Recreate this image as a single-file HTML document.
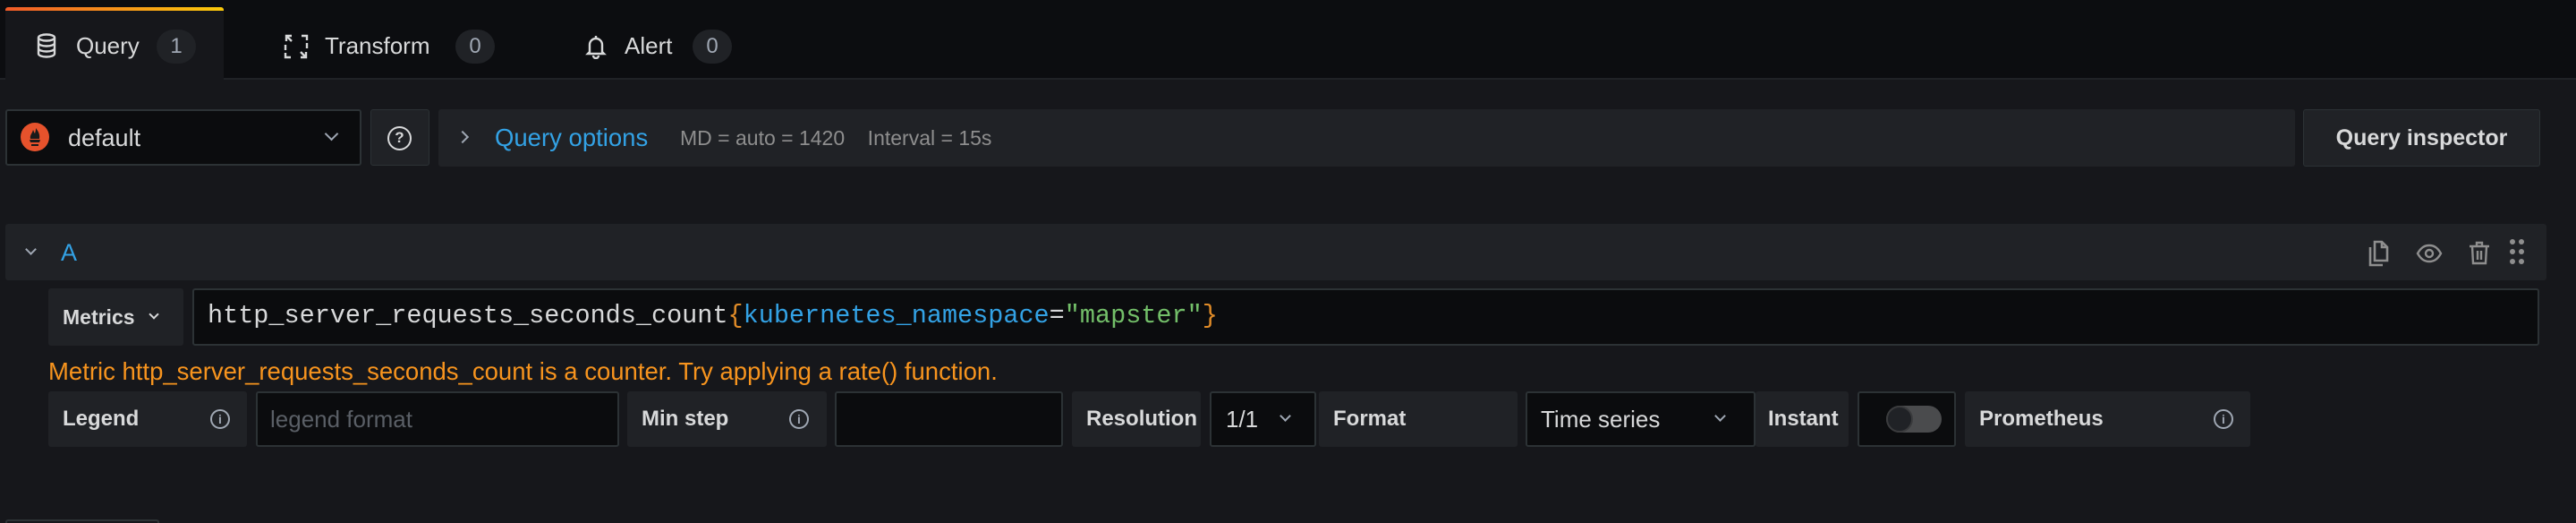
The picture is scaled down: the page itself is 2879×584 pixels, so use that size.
<!DOCTYPE html>
<html><head><meta charset="utf-8"><style>
*{box-sizing:border-box;margin:0;padding:0}
body{width:2879px;height:584px;background:#16171b;font-family:"Liberation Sans",sans-serif;color:#d8d9da;position:relative;overflow:hidden}
.a{position:absolute}
.top{left:0;top:0;width:2879px;height:89px;background:#0c0d10;border-bottom:2px solid #202226}
.tab{top:8px;left:6px;width:244px;height:83px;background:#16171b;border-radius:3px 3px 0 0}
.tab .g{position:absolute;left:0;top:0;width:100%;height:4px;background:linear-gradient(90deg,#f05a28,#fbca0a);border-radius:3px 3px 0 0}
.tt{font-size:26px;top:33px;line-height:36px}
.badge{top:33px;height:38px;width:44px;border-radius:19px;background:#202226;color:#9fa7b3;font-size:24px;text-align:center;line-height:38px}
.box{background:#202226;border-radius:3px}
.inp{background:#0b0c0e;border:2px solid #2c3235;border-radius:3px}
.lbl{font-size:24px;font-weight:bold;color:#d8d9da;line-height:62px;padding-left:16px}
.info{width:22px;height:22px;border:2px solid #9fa7b3;border-radius:50%;color:#9fa7b3;font-size:14px;text-align:center;line-height:18px;font-weight:bold}
.chev{width:12px;height:12px;border-right:2.5px solid #9fa7b3;border-bottom:2.5px solid #9fa7b3;transform:rotate(45deg)}
</style></head><body>
<div class="a top"></div>
<div class="a tab"><div class="g"></div></div>
<svg class="a" style="left:40px;top:37px" width="24" height="28" viewBox="0 0 24 28" fill="none" stroke="#d8d9da" stroke-width="2.4"><ellipse cx="12" cy="5" rx="9" ry="3.5"/><path d="M3 5v18c0 2 4 3.5 9 3.5s9-1.5 9-3.5V5M3 11c0 2 4 3.5 9 3.5s9-1.5 9-3.5M3 17c0 2 4 3.5 9 3.5s9-1.5 9-3.5"/></svg>
<div class="a tt" style="left:85px">Query</div>
<div class="a badge" style="left:175px">1</div>
<svg class="a" style="left:317px;top:38px" width="28" height="28" viewBox="0 0 28 28" fill="none" stroke="#d8d9da" stroke-width="2.4"><path d="M9 2H3v6M2 12v6M19 26h6v-6M26 16v-6M3 2l6 6M25 26l-6-6M20 2h6v5M8 26H2v-5"/></svg>
<div class="a tt" style="left:363px">Transform</div>
<div class="a badge" style="left:509px">0</div>
<svg class="a" style="left:654px;top:38px" width="24" height="28" viewBox="0 0 24 28" fill="none" stroke="#d8d9da" stroke-width="2.4"><path d="M12 2v3M5 20V12a7 7 0 0 1 14 0v8l2 2H3zM9 24a3 3 0 0 0 6 0"/></svg>
<div class="a tt" style="left:698px">Alert</div>
<div class="a badge" style="left:774px">0</div>

<div class="a inp" style="left:6px;top:122px;width:398px;height:63px"></div>
<svg class="a" style="left:23px;top:137px" width="32" height="32" viewBox="0 0 32 32"><circle cx="16" cy="16" r="16" fill="#e6522c"/><path d="M10 19h12l-1 3H11zM12 24h8v2h-8zM11 18c-1-4 2-6 3-10 1 2 1 3 2 4 1-3 1-4 1-6 2 3 5 6 4 12z" fill="#1a1a1a"/></svg>
<div class="a" style="left:76px;top:137px;font-size:27px;line-height:34px">default</div>
<div class="a chev" style="left:365px;top:144px;width:11px;height:11px"></div>
<div class="a box" style="left:414px;top:122px;width:66px;height:63px;background:#202226;border:1px solid #2c3235"></div>
<div class="a" style="left:433px;top:141px;width:27px;height:27px;border:2.5px solid #d8d9da;border-radius:50%;font-size:17px;font-weight:bold;text-align:center;line-height:22px">?</div>
<div class="a box" style="left:490px;top:122px;width:2075px;height:64px"></div>
<div class="a chev" style="left:512px;top:148px;transform:rotate(-45deg);width:10px;height:10px"></div>
<div class="a" style="left:553px;top:137px;font-size:27.5px;color:#33a2e5;line-height:34px">Query options</div>
<div class="a" style="left:760px;top:140px;font-size:23px;color:#8e8e8e;line-height:28px">MD = auto = 1420 &nbsp;&nbsp;&nbsp;Interval = 15s</div>
<div class="a box" style="left:2574px;top:122px;width:265px;height:64px;border:1px solid #2c3235"></div>
<div class="a" style="left:2574px;top:137px;width:265px;text-align:center;font-size:25px;font-weight:bold;line-height:34px">Query inspector</div>

<div class="a box" style="left:6px;top:250px;width:2840px;height:63px"></div>
<div class="a chev" style="left:30px;top:274px;width:9px;height:9px"></div>
<div class="a" style="left:68px;top:265px;font-size:27px;color:#33a2e5;line-height:34px">A</div>
<svg class="a" style="left:2645px;top:267px" width="30" height="32" viewBox="0 0 30 32" fill="none" stroke="#8e8e8e" stroke-width="2.6"><path d="M9 3h8l6 6v15H9z M17 3v6h6 M4 9v20h14"/></svg>
<svg class="a" style="left:2700px;top:268px" width="30" height="30" viewBox="0 0 30 30" fill="none" stroke="#8e8e8e" stroke-width="2.4"><path d="M2 15c4-7 8-9 13-9s9 2 13 9c-4 7-8 9-13 9s-9-2-13-9z"/><circle cx="15" cy="15" r="4"/></svg>
<svg class="a" style="left:2757px;top:268px" width="30" height="30" viewBox="0 0 30 30" fill="none" stroke="#8e8e8e" stroke-width="2.4"><path d="M3 7h22M11 7V3h6v4M6 7l1 19h14l1-19M12 12v10M16 12v10"/></svg>
<svg class="a" style="left:2803px;top:266px" width="20" height="30" viewBox="0 0 20 30" fill="#8e8e8e"><circle cx="5" cy="4" r="3"/><circle cx="15" cy="4" r="3"/><circle cx="5" cy="15" r="3"/><circle cx="15" cy="15" r="3"/><circle cx="5" cy="26" r="3"/><circle cx="15" cy="26" r="3"/></svg>

<div class="a box" style="left:54px;top:322px;width:151px;height:64px"></div>
<div class="a" style="left:70px;top:337px;font-size:23px;font-weight:bold;line-height:34px">Metrics</div>
<div class="a chev" style="left:168px;top:347px;width:8px;height:8px;border-color:#d8d9da"></div>
<div class="a inp" style="left:215px;top:322px;width:2623px;height:64px"></div>
<div class="a" style="left:232px;top:336px;font-family:'Liberation Mono',monospace;font-size:28.5px;line-height:34px;white-space:pre">http_server_requests_seconds_count<span style="color:#e08b28">{</span><span style="color:#33a2e5">kubernetes_namespace</span>=<span style="color:#73bf69">"mapster"</span><span style="color:#e08b28">}</span></div>

<div class="a" style="left:54px;top:399px;font-size:27.5px;color:#f7941e;line-height:32px">Metric http_server_requests_seconds_count is a counter. Try applying a rate() function.</div>

<div class="a box lbl" style="left:54px;top:437px;width:222px;height:62px">Legend</div>
<div class="a info" style="left:235px;top:457px">i</div>
<div class="a inp" style="left:286px;top:437px;width:406px;height:62px"></div>
<div class="a" style="left:302px;top:452px;font-size:26px;color:#5a5f66;line-height:32px">legend format</div>
<div class="a box lbl" style="left:701px;top:437px;width:223px;height:62px">Min step</div>
<div class="a info" style="left:882px;top:457px">i</div>
<div class="a inp" style="left:933px;top:437px;width:255px;height:62px"></div>
<div class="a box lbl" style="left:1198px;top:437px;width:144px;height:62px">Resolution</div>
<div class="a inp" style="left:1352px;top:437px;width:119px;height:62px"></div>
<div class="a" style="left:1370px;top:452px;font-size:26px;line-height:32px">1/1</div>
<div class="a chev" style="left:1432px;top:460px;width:9px;height:9px"></div>
<div class="a box lbl" style="left:1474px;top:437px;width:222px;height:62px">Format</div>
<div class="a inp" style="left:1705px;top:437px;width:257px;height:62px"></div>
<div class="a" style="left:1722px;top:452px;font-size:26px;line-height:32px">Time series</div>
<div class="a chev" style="left:1918px;top:460px;width:9px;height:9px"></div>
<div class="a box lbl" style="left:1962px;top:437px;width:104px;height:62px;padding-left:14px">Instant</div>
<div class="a inp" style="left:2076px;top:437px;width:110px;height:62px"></div>
<div class="a" style="left:2108px;top:453px;width:62px;height:30px;border-radius:15px;background:#4a4b4d"></div>
<div class="a" style="left:2108px;top:453px;width:30px;height:30px;border-radius:50%;background:#202226;border:2px solid #3a3b3d"></div>
<div class="a box lbl" style="left:2196px;top:437px;width:319px;height:62px">Prometheus</div>
<div class="a info" style="left:2474px;top:457px">i</div>
<div class="a" style="left:6px;top:580px;width:172px;height:4px;border-top:2px solid #2c3235;border-left:2px solid #2c3235;border-right:2px solid #2c3235;border-radius:3px 3px 0 0"></div>
</body></html>
